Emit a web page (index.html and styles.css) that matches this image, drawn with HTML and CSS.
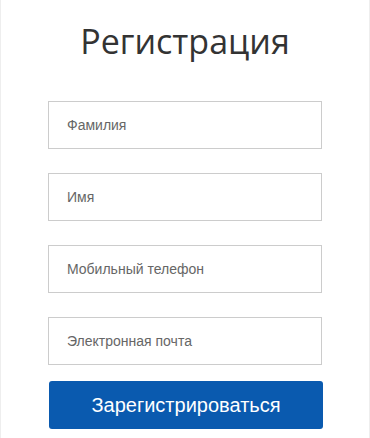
FILE: index.html
```html
<!DOCTYPE html>
<html lang="ru">
<head>
  <meta charset="UTF-8" />
  <meta name="viewport" content="width=device-width, initial-scale=1.0"/>
  <title>Регистрация</title>
  <link rel="stylesheet" href="styles.css">
</head>
<body>
  <div class="card">
    <h1>Регистрация</h1>
    <form class="reg-form">
      <input class="field" type="text" placeholder="Фамилия">
      <input class="field" type="text" placeholder="Имя">
      <input class="field" type="tel" placeholder="Мобильный телефон">
      <input class="field" type="email" placeholder="Электронная почта">
      <button class="submit" type="button">Зарегистрироваться</button>
    </form>
  </div>
</body>
</html>
```

FILE: styles.css
```css
html, body {
  margin: 0;
  padding: 0;
  background: #fff;
  height: 100%;
}
.card {
  box-sizing: border-box;
  width: 370px;
  height: 438px;
  border-left: 1px solid #eee;
  border-right: 1px solid #eee;
  padding: 16px 0 0 47px;
  overflow: hidden;
}
h1 {
  margin: 0 0 35px -47px;
  font-family: "Open Sans", sans-serif;
  font-weight: 400;
  font-size: 34px;
  line-height: 50px;
  color: #333;
  text-align: center;
}
.reg-form {
  display: flex;
  flex-direction: column;
  width: 275px;
}
.field {
  box-sizing: border-box;
  width: 274px;
  height: 48px;
  margin-bottom: 24px;
  padding: 0 18px;
  border: 1px solid #ccc;
  border-radius: 0;
  font-family: "Liberation Sans", Arial, sans-serif;
  font-size: 14px;
  color: #333;
  outline: none;
}
.field:nth-of-type(4) {
  margin-bottom: 16px;
}
.field::placeholder {
  color: #666;
}
.submit {
  box-sizing: border-box;
  width: 274px;
  height: 48px;
  margin-left: 1px;
  background: #0a5aaf;
  color: #fff;
  border: none;
  border-radius: 3px;
  font-family: "Liberation Sans", Arial, sans-serif;
  font-size: 20px;
  cursor: pointer;
}
```
